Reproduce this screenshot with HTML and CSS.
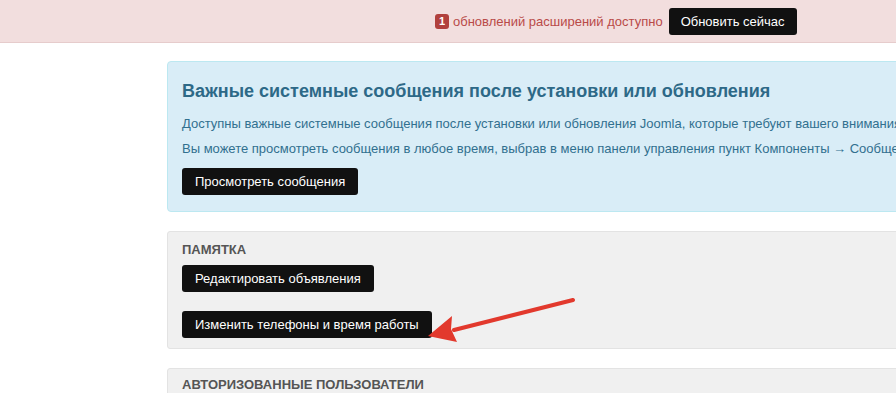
FILE: index.html
```html
<!DOCTYPE html>
<html lang="ru">
<head>
  <meta charset="UTF-8" />
  <meta name="viewport" content="width=device-width, initial-scale=1.0" />
  <title>Панель управления</title>
  <link rel="stylesheet" href="styles.css">
</head>
<body>
<header class="topbar">
  <span class="badge">1</span>
  <span class="topbar-text">обновлений расширений доступно</span>
  <a class="btn" href="#">Обновить сейчас</a>
</header>
<main class="content">
  <div class="alert-info">
    <h2 class="alert-title">Важные системные сообщения после установки или обновления</h2>
    <p>Доступны важные системные сообщения после установки или обновления Joomla, которые требуют вашего внимания.</p>
    <p>Вы можете просмотреть сообщения в любое время, выбрав в меню панели управления пункт Компоненты → Сообщения после установки.</p>
    <a class="btn" href="#">Просмотреть сообщения</a>
  </div>
  <div class="well">
    <h3 class="well-title">Памятка</h3>
    <div class="well-actions">
      <a class="btn" href="#">Редактировать объявления</a>
      <a class="btn" href="#">Изменить телефоны и время работы</a>
    </div>
    <svg class="arrow" width="160" height="50" viewBox="0 0 160 50">
      <line x1="149" y1="6" x2="30" y2="36" stroke="#e2392d" stroke-width="4" stroke-linecap="round" />
      <path d="M4 42 L28 22 L27 35 L33 48 Z" fill="#e2392d" />
    </svg>
  </div>
  <div class="well well-last">
    <h3 class="well-title">Авторизованные пользователи</h3>
  </div>
</main>
</body>
</html>
```

FILE: styles.css
```css
* {
  padding: 0;
  margin: 0;
  box-sizing: border-box;
}
body {
  background: #fff;
  height: 100vh;
  overflow: hidden;
  font-family: "Liberation Sans", Arial, sans-serif;
  font-size: 13px;
}
.topbar {
  height: 43px;
  background: #f2dede;
  border-bottom: 1px solid #e6cccc;
  display: flex;
  align-items: center;
  padding-left: 435px;
}
.badge {
  display: inline-block;
  width: 14px;
  height: 15px;
  line-height: 15px;
  border-radius: 3px;
  background: #b1403d;
  color: #fff;
  font-size: 11px;
  font-weight: bold;
  text-align: center;
  margin-right: 4px;
}
.topbar-text {
  color: #b94a48;
  font-size: 13px;
  margin-right: 6px;
}
.btn {
  display: inline-block;
  background: #111;
  color: #fff;
  text-decoration: none;
  font-size: 13px;
  line-height: 27px;
  height: 27px;
  padding: 0 13px;
  border-radius: 3px;
  white-space: nowrap;
}
.topbar .btn {
  padding: 0 12px;
}
.content {
  margin-left: 167px;
  width: 1000px;
  padding-top: 18px;
}
.alert-info {
  background: #d9edf7;
  border: 1px solid #bce8f1;
  border-radius: 4px;
  padding: 19px 14px 16px;
  color: #31708f;
  white-space: nowrap;
}
.alert-title {
  color: #2d6987;
  font-size: 18px;
  font-weight: bold;
  margin-bottom: 14px;
}
.alert-info p {
  margin-bottom: 10px;
  line-height: 15px;
}
.alert-info .btn {
  margin-top: 2px;
}
.well {
  position: relative;
  margin-top: 19px;
  background: #f0f0f0;
  border: 1px solid #e3e3e3;
  border-radius: 3px;
  padding: 10px 14px 10px;
}
.well-last {
  padding-top: 8px;
}
.well-title {
  color: #555;
  font-size: 13px;
  font-weight: bold;
  text-transform: uppercase;
  line-height: 16px;
  margin-bottom: 7px;
}
.well-actions {
  display: flex;
  flex-direction: column;
  align-items: flex-start;
  gap: 19px;
}
.arrow {
  position: absolute;
  left: 256px;
  top: 62px;
}
```
